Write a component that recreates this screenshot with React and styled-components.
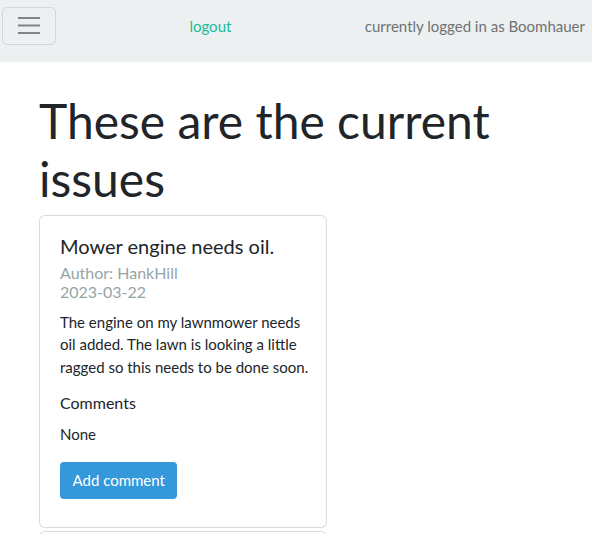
import React from 'react';
import styled, { createGlobalStyle } from 'styled-components';

const GlobalStyle = createGlobalStyle`
    html, body {
        margin: 0;
        padding: 0;
        overflow: hidden;
        background: #ffffff;
    }
    body {
        font-family: Lato, "Liberation Sans", sans-serif;
        font-size: 15px;
        line-height: 1.5;
        color: #212529;
    }
    * { box-sizing: border-box; }
`

const NavBar = styled.nav`
    display: flex;
    align-items: center;
    justify-content: space-between;
    height: 62px;
    padding: 0 7px 10px 2px;
    background-color: #ecf0f1;
`

const Toggler = styled.button`
    display: flex;
    align-items: center;
    justify-content: center;
    width: 54px;
    height: 38px;
    padding: 0;
    background: transparent;
    border: 1px solid rgba(0,0,0,.1);
    border-radius: 5px;
    cursor: pointer;
`

const NavLink = styled.a`
    font-size: 15px;
    color: ${props => props.$accent ? '#18bc9c' : '#6f7273'};
    text-decoration: none;
    cursor: pointer;
`

const Main = styled.main`
    padding: 30px 39px 0 39px;
`

const Heading = styled.h1`
    margin: 0 0 8px 0;
    font-size: 48px;
    font-weight: 400;
    line-height: 1.2;
`

const Card = styled.div`
    width: 288px;
    margin-bottom: 3px;
    background: #ffffff;
    border: 1px solid rgba(0,0,0,.14);
    border-radius: 6px;
`

const CardBody = styled.div`
    padding: 18px 10px 28px 20px;
`

const CardTitle = styled.h5`
    margin: 0 0 5px 0;
    font-size: 20px;
    font-weight: 400;
    line-height: 1.2;
`

const CardSubtitle = styled.h6`
    margin: 0;
    font-size: 16px;
    font-weight: 400;
    line-height: 1.2;
    color: #95a5a6;
`

const Text = styled.p`
    margin: ${props => props.$lead ? '9px 0 15px 0' : '0 0 16px 0'};
    max-width: ${props => props.$lead ? '256px' : 'none'};
`

const SectionLabel = styled.h6`
    margin: 0 0 11px 0;
    font-size: 16px;
    font-weight: 400;
    line-height: 1.2;
`

const Button = styled.button`
    display: inline-block;
    height: 37px;
    padding: 0 12.5px;
    font-family: inherit;
    font-size: 15px;
    line-height: 37px;
    color: #ffffff;
    background-color: #3498db;
    border: none;
    border-radius: 4px;
    cursor: pointer;
`

function MenuIcon() {
    return (
        <svg width="30" height="30" viewBox="0 0 30 30">
            <path d="M4 7h22M4 14.5h22M4 22h22" stroke="rgba(0,0,0,0.45)" strokeWidth="2.2" />
        </svg>
    )
}

const issues = [
    {
        title: 'Mower engine needs oil.',
        author: 'HankHill',
        date: '2023-03-22',
        body: 'The engine on my lawnmower needs oil added. The lawn is looking a little ragged so this needs to be done soon.',
    },
    {
        title: 'Fence gate is squeaking.',
        author: 'DaleGribble',
        date: '2023-03-24',
        body: 'The back gate squeaks every time it opens. Somebody should take a look.',
    },
]

export default function App() {
    return (
        <>
            <GlobalStyle />
            <NavBar>
                <Toggler aria-label="menu">
                    <MenuIcon />
                </Toggler>
                <NavLink $accent>logout</NavLink>
                <NavLink>currently logged in as Boomhauer</NavLink>
            </NavBar>
            <Main>
                <Heading>These are the current issues</Heading>
                {issues.map(issue => (
                    <Card key={issue.title}>
                        <CardBody>
                            <CardTitle>{issue.title}</CardTitle>
                            <CardSubtitle>Author: {issue.author}</CardSubtitle>
                            <CardSubtitle>{issue.date}</CardSubtitle>
                            <Text $lead>{issue.body}</Text>
                            <SectionLabel>Comments</SectionLabel>
                            <Text>None</Text>
                            <Button>Add comment</Button>
                        </CardBody>
                    </Card>
                ))}
            </Main>
        </>
    )
}
